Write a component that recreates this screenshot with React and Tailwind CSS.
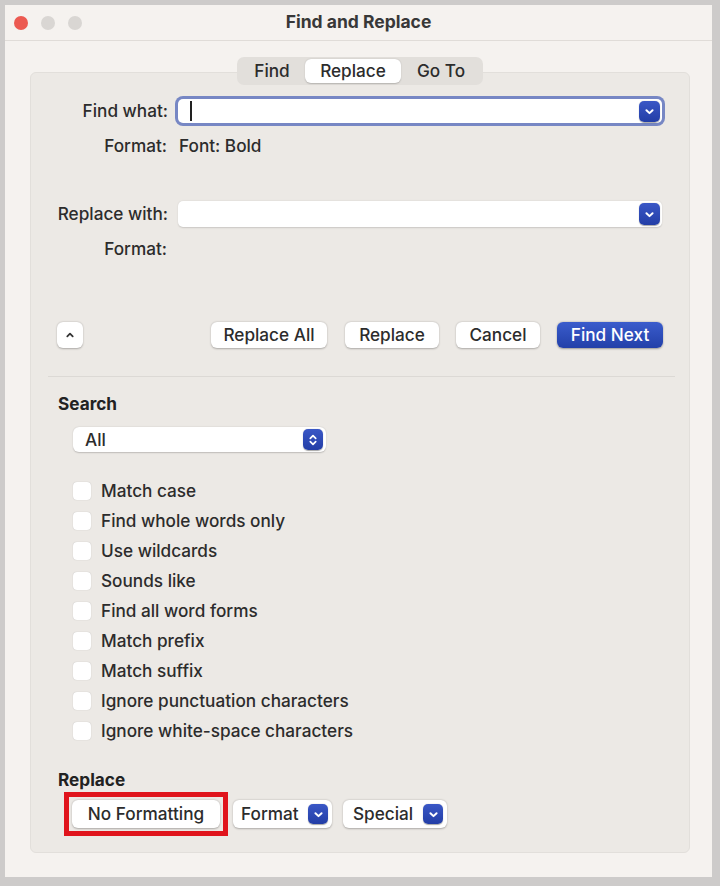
import React from "react";

const font = { fontFamily: "Inter, 'Noto Sans', 'Liberation Sans', sans-serif" };

const options = [
  "Match case",
  "Find whole words only",
  "Use wildcards",
  "Sounds like",
  "Find all word forms",
  "Match prefix",
  "Match suffix",
  "Ignore punctuation characters",
  "Ignore white-space characters",
];

function ChevronDown() {
  return (
    <svg width="11" height="11" viewBox="0 0 10 10" fill="none">
      <path d="M2.2 3.8 L5 6.5 L7.8 3.8" stroke="white" strokeWidth="1.8" strokeLinecap="round" strokeLinejoin="round" />
    </svg>
  );
}

function BlueBox({ children, className = "" }) {
  return (
    <span
      className={`flex shrink-0 items-center justify-center rounded-[5px] bg-gradient-to-b from-[#3a57c6] to-[#233ea6] shadow-[0_0.5px_1px_rgba(0,0,0,0.35)] ${className}`}
    >
      {children}
    </span>
  );
}

function Btn({ children, className = "", center = true }) {
  return (
    <div
      className={`flex items-center rounded-[6px] bg-white text-[#2c2c2c] shadow-[0_0.5px_2px_rgba(0,0,0,0.28)] ${
        center ? "justify-center" : "justify-between"
      } ${className}`}
    >
      {children}
    </div>
  );
}

export default function App() {
  return (
    <div className="h-[886px] w-[720px] bg-[#cdcbca] pb-[9px] pl-[5px] pr-[8px] pt-[5px]" style={font}>
      <div className="flex h-full flex-col bg-[#f5f2ef]">
        {/* title bar */}
        <div className="relative flex h-[36px] items-center border-b border-[#e0dcd8] pl-[9px]">
          <div className="flex gap-[13px]">
            <span className="h-[14px] w-[14px] rounded-full bg-[#ec5a51]" />
            <span className="h-[14px] w-[14px] rounded-full bg-[#d9d6d3]" />
            <span className="h-[14px] w-[14px] rounded-full bg-[#d9d6d3]" />
          </div>
          <div className="absolute inset-0 flex items-center justify-center text-[17.5px] font-bold text-[#383838]">
            Find and Replace
          </div>
        </div>

        <div className="flex flex-1 flex-col px-[22px] pb-[24px] pl-[25px] pt-[16px]">
          {/* tabs */}
          <div className="relative z-10 mb-[-13px] flex justify-center">
            <div className="flex h-[28px] items-center rounded-[7px] bg-[#e2dfdb] px-[2px] text-[17.2px] font-medium text-[#2c2c2c]">
              <div className="flex h-[24px] w-[66px] items-center justify-center">Find</div>
              <div className="flex h-[24px] w-[96px] items-center justify-center rounded-[6px] bg-white shadow-[0_0.5px_1.5px_rgba(0,0,0,0.2)]">
                Replace
              </div>
              <div className="flex h-[24px] w-[80px] items-center justify-center">Go To</div>
            </div>
          </div>

          {/* panel */}
          <div className="flex flex-1 flex-col rounded-[6px] border border-[#e2dfdb] bg-[#ece9e5] pt-[26px] text-[17.2px] font-medium text-[#2c2c2c]">
            {/* find what */}
            <div className="flex h-[24px] items-center">
              <div className="w-[137px] text-right">Find what:</div>
              <div className="ml-[10px] flex h-[24px] w-[484px] items-center rounded-[5px] bg-white pl-[12px] pr-[2px] ring-[3px] ring-[#7787c4]">
                <span className="h-[20px] w-[1.5px] bg-[#222]" />
                <span className="flex-1" />
                <BlueBox className="h-[21px] w-[21px]">
                  <ChevronDown />
                </BlueBox>
              </div>
            </div>
            <div className="mt-[11px] flex h-[24px] items-center">
              <div className="w-[136px] text-right">Format:</div>
              <div className="ml-[12px]">Font: Bold</div>
            </div>

            {/* replace with */}
            <div className="mt-[43px] flex h-[26px] items-center">
              <div className="w-[137px] text-right">Replace with:</div>
              <div className="ml-[10px] flex h-[26px] w-[484px] items-center justify-end rounded-[5px] bg-white pr-[2px] shadow-[0_0.5px_1.5px_rgba(0,0,0,0.15)]">
                <BlueBox className="h-[22px] w-[21px]">
                  <ChevronDown />
                </BlueBox>
              </div>
            </div>
            <div className="mt-[10px] flex h-[24px] items-center">
              <div className="w-[136px] text-right">Format:</div>
            </div>

            {/* actions */}
            <div className="mt-[61px] flex items-center pl-[26px] pr-[26px]">
              <Btn className="h-[26px] w-[26px]">
                <svg width="10" height="10" viewBox="0 0 10 10" fill="none">
                  <path d="M2.3 6.3 L5 3.6 L7.7 6.3" stroke="#333" strokeWidth="1.8" strokeLinecap="round" strokeLinejoin="round" />
                </svg>
              </Btn>
              <div className="flex-1" />
              <Btn className="h-[26px] w-[116px]">Replace All</Btn>
              <Btn className="ml-[18px] h-[26px] w-[94px]">Replace</Btn>
              <Btn className="ml-[17px] h-[26px] w-[84px]">Cancel</Btn>
              <div className="ml-[17px] flex h-[26px] w-[106px] items-center justify-center rounded-[6px] bg-gradient-to-b from-[#3a5ccc] to-[#2340a9] text-white shadow-[0_0.5px_2px_rgba(0,0,0,0.35)]">
                Find Next
              </div>
            </div>

            <div className="ml-[17px] mr-[14px] mt-[28px] h-px bg-[#dcd9d5]" />

            {/* search */}
            <div className="ml-[27px] mt-[17px] flex h-[20px] items-center font-bold text-[#222]">Search</div>
            <div className="ml-[42px] mt-[13px] flex h-[25px] w-[253px] items-center rounded-[6px] bg-white pl-[12px] pr-[3px] shadow-[0_0.5px_1.5px_rgba(0,0,0,0.2)]">
              <span className="flex-1">All</span>
              <BlueBox className="h-[21px] w-[20px]">
                <svg width="10" height="14" viewBox="0 0 10 14" fill="none">
                  <path d="M2.3 5.3 L5 2.6 L7.7 5.3 M2.3 8.7 L5 11.4 L7.7 8.7" stroke="white" strokeWidth="1.7" strokeLinecap="round" strokeLinejoin="round" />
                </svg>
              </BlueBox>
            </div>

            <div className="ml-[42px] mt-[24px] flex flex-col">
              {options.map((o) => (
                <div key={o} className="flex h-[30px] items-center">
                  <span className="h-[18px] w-[18px] rounded-[4px] bg-white shadow-[0_0_1px_rgba(0,0,0,0.25)]" />
                  <span className="ml-[10px]">{o}</span>
                </div>
              ))}
            </div>

            {/* replace */}
            <div className="ml-[27px] mt-[24px] flex h-[20px] items-center font-bold text-[#222]">Replace</div>
            <div className="ml-[33px] mt-[2px] flex items-center">
              <div className="border-[5px] border-[#e0141c] px-[3px] py-[3px]">
                <Btn className="h-[28px] w-[148px]">No Formatting</Btn>
              </div>
              <Btn center={false} className="ml-[5px] h-[28px] w-[99px] pl-[8px] pr-[4px]">
                <span>Format</span>
                <BlueBox className="h-[20px] w-[20px]">
                  <ChevronDown />
                </BlueBox>
              </Btn>
              <Btn center={false} className="ml-[11px] h-[28px] w-[104px] pl-[10px] pr-[4px]">
                <span>Special</span>
                <BlueBox className="h-[20px] w-[20px]">
                  <ChevronDown />
                </BlueBox>
              </Btn>
            </div>
          </div>
        </div>
      </div>
    </div>
  );
}
